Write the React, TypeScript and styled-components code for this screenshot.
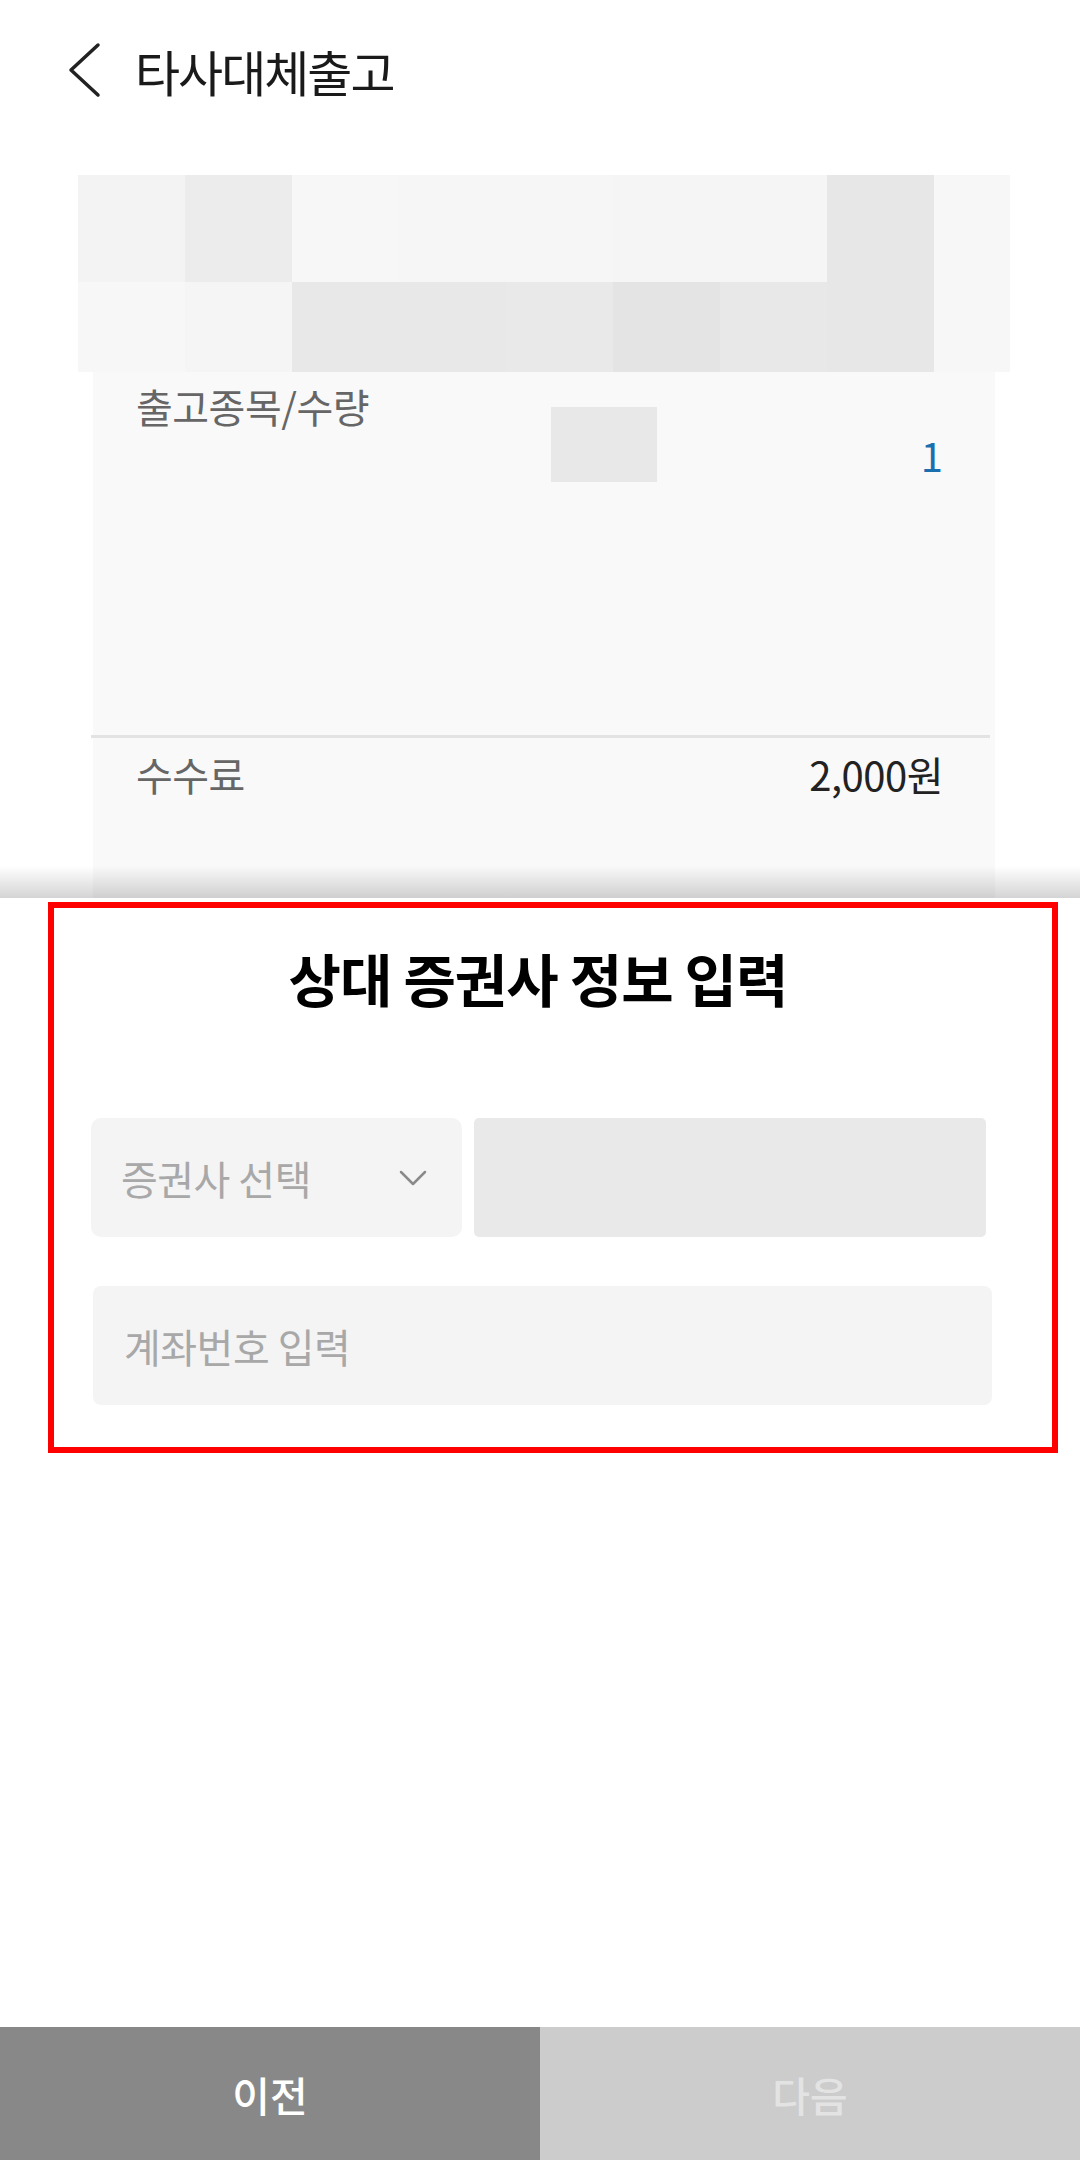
import React from "react";
import styled, { createGlobalStyle } from "styled-components";

const GlobalStyle = createGlobalStyle`
  html, body {
    margin: 0;
    padding: 0;
    background: #ffffff;
  }
  body {
    font-family: "Noto Sans CJK KR", "Noto Sans", sans-serif;
    color: #1a1a1a;
  }
  * {
    box-sizing: border-box;
  }
`;

// 전체 화면
const Page = styled.div`
  display: flex;
  flex-direction: column;
  min-height: 100vh;
  width: 1080px;
`;

// 상단 헤더
const Header = styled.header`
  display: flex;
  align-items: center;
  height: 140px;
  padding-left: 68px;
  margin-bottom: 35px;
`;

const BackButton = styled.button`
  display: flex;
  align-items: center;
  padding: 0;
  border: 0;
  background: none;
  width: 34px;
  height: 56px;
`;

const Title = styled.h1`
  margin: 0 0 0 33px;
  font-size: 49px;
  line-height: 1;
  font-weight: 400;
  letter-spacing: -2px;
  color: #1a1a1a;
`;

// 가려진 영역 (모자이크)
const Mosaic = styled.div`
  display: grid;
  grid-template-columns: repeat(8, 107px) 76px;
  grid-template-rows: 107px 90px;
  margin-left: 78px;
  width: 932px;
`;

const Cell = styled.div<{ $tone: string }>`
  background: ${(p) => p.$tone};
`;

// 출고 정보 카드
const Card = styled.section`
  margin-left: 93px;
  width: 902px;
  height: 526px;
  background: #f9f9f9;
  display: flex;
  flex-direction: column;
`;

const ItemRow = styled.div`
  display: grid;
  grid-template-columns: 415px 106px 1fr;
  align-items: start;
  height: 363px;
  padding: 14px 52px 0 43px;
`;

const Label = styled.span`
  font-size: 40px;
  line-height: 1;
  letter-spacing: -0.5px;
  color: #666666;
`;

const Hidden = styled.div`
  margin-top: 21px;
  height: 75px;
  background: #e8e8e8;
`;

const Quantity = styled.span`
  justify-self: end;
  margin-top: 49px;
  font-size: 40px;
  line-height: 1;
  color: #1a6fae;
`;

const Divider = styled.hr`
  margin: 0 5px 0 -2px;
  border: 0;
  height: 3px;
  background: #e3e3e3;
`;

const FeeRow = styled.div`
  display: flex;
  justify-content: space-between;
  align-items: flex-start;
  padding: 16px 52px 0 43px;
`;

const Amount = styled.span`
  font-size: 40px;
  line-height: 1;
  letter-spacing: -0.5px;
  color: #222222;
`;

// 하단 시트
const Sheet = styled.div`
  position: relative;
  flex: 1;
  background: #ffffff;
  padding-top: 4px;

  &::before {
    content: "";
    position: absolute;
    left: 0;
    right: 0;
    top: -32px;
    height: 32px;
    background: linear-gradient(rgba(0, 0, 0, 0), rgba(0, 0, 0, 0.17));
  }
`;

const Frame = styled.div`
  margin: 0 22px 0 48px;
  border: 6px solid #ff0000;
  padding: 41px 0 42px;
`;

const SheetTitle = styled.h2`
  margin: 0;
  padding-right: 30px;
  text-align: center;
  font-size: 57px;
  line-height: 1;
  font-weight: 700;
  letter-spacing: -1px;
  color: #000000;
`;

const SelectRow = styled.div`
  display: flex;
  gap: 12px;
  height: 119px;
  margin: 112px 66px 0 37px;
`;

const Select = styled.div`
  display: flex;
  align-items: center;
  justify-content: space-between;
  width: 371px;
  padding: 0 35px 0 30px;
  border-radius: 10px;
  background: #f4f4f4;
`;

const Placeholder = styled.span`
  font-size: 40px;
  line-height: 1;
  letter-spacing: -0.5px;
  color: #a8a8a8;
`;

const Masked = styled.div`
  flex: 1;
  border-radius: 5px;
  background: #e9e9e9;
`;

const AccountInput = styled.div`
  display: flex;
  align-items: center;
  height: 119px;
  margin: 49px 60px 0 39px;
  padding-left: 31px;
  border-radius: 8px;
  background: #f4f4f4;
`;

// 하단 버튼
const BottomBar = styled.nav`
  display: grid;
  grid-template-columns: 1fr 1fr;
  height: 133px;
`;

const ActionButton = styled.button<{ $primary?: boolean }>`
  border: 0;
  margin: 0;
  font-family: inherit;
  font-size: 41px;
  font-weight: 500;
  background: ${(p) => (p.$primary ? "#888888" : "#cccccc")};
  color: ${(p) => (p.$primary ? "#ffffff" : "#e3e3e3")};
`;

const mosaicTones = [
  ["#f3f3f3", "#ececec", "#f7f7f7", "#f6f6f6", "#f6f6f6", "#f5f5f5", "#f5f5f5", "#e7e7e7", "#f7f7f7"],
  ["#f7f7f7", "#f5f5f5", "#e8e8e8", "#e8e8e8", "#e9e9e9", "#e4e4e4", "#e8e8e8", "#e7e7e7", "#f7f7f7"],
];

const App = () => {
  return (
    <>
      <GlobalStyle />
      <Page>
        <Header>
          <BackButton aria-label="뒤로">
            <svg width="34" height="56" viewBox="0 0 34 56">
              <polyline
                points="30,3 3,28 30,53"
                fill="none"
                stroke="#222"
                strokeWidth="3.5"
                strokeLinecap="round"
                strokeLinejoin="round"
              />
            </svg>
          </BackButton>
          <Title>타사대체출고</Title>
        </Header>

        <Mosaic>
          {mosaicTones.flat().map((tone, i) => (
            <Cell key={i} $tone={tone} />
          ))}
        </Mosaic>

        <Card>
          <ItemRow>
            <Label>출고종목/수량</Label>
            <Hidden />
            <Quantity>1</Quantity>
          </ItemRow>
          <Divider />
          <FeeRow>
            <Label>수수료</Label>
            <Amount>2,000원</Amount>
          </FeeRow>
        </Card>

        <Sheet>
          <Frame>
            <SheetTitle>상대 증권사 정보 입력</SheetTitle>
            <SelectRow>
              <Select>
                <Placeholder>증권사 선택</Placeholder>
                <svg width="28" height="16" viewBox="0 0 28 16">
                  <polyline
                    points="2,2 14,14 26,2"
                    fill="none"
                    stroke="#8a8a8a"
                    strokeWidth="2.5"
                    strokeLinecap="round"
                    strokeLinejoin="round"
                  />
                </svg>
              </Select>
              <Masked />
            </SelectRow>
            <AccountInput>
              <Placeholder>계좌번호 입력</Placeholder>
            </AccountInput>
          </Frame>
        </Sheet>

        <BottomBar>
          <ActionButton $primary>이전</ActionButton>
          <ActionButton>다음</ActionButton>
        </BottomBar>
      </Page>
    </>
  );
};

export default App;
